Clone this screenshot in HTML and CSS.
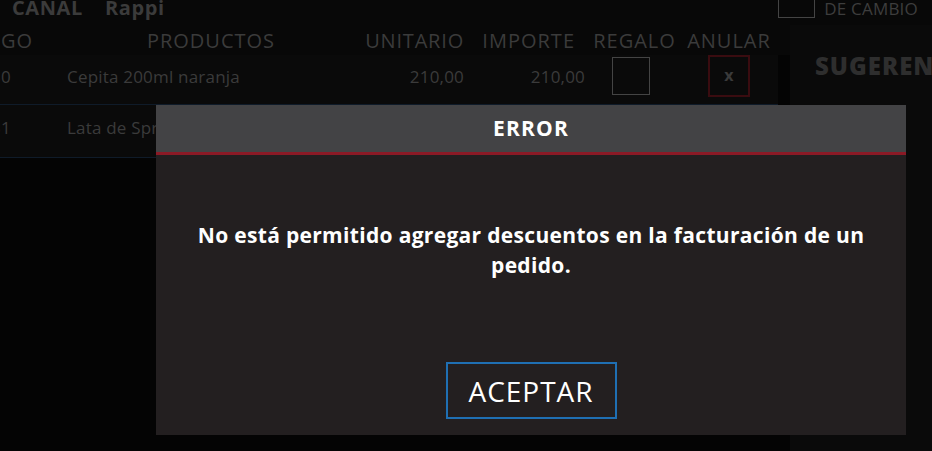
FILE: index.html
```html
<!DOCTYPE html>
<html lang="es">
<head>
<meta charset="utf-8">
<title>Error</title>
<link rel="stylesheet" href="styles.css">
</head>
<body>
<div class="app">
  <div class="topbar">
    <div class="canal"><span class="canal-label">CANAL</span><span class="canal-value">Rappi</span></div>
    <div class="cambio"><span class="check small"></span><span class="cambio-label">DE CAMBIO</span></div>
  </div>
  <div class="content">
    <div class="main">
      <div class="row head">
        <div class="c code">CÓDIGO</div>
        <div class="c prod">PRODUCTOS</div>
        <div class="c unit">UNITARIO</div>
        <div class="c imp">IMPORTE</div>
        <div class="c reg">REGALO</div>
        <div class="c anu">ANULAR</div>
      </div>
      <div class="row item">
        <div class="c code">1230</div>
        <div class="c prod">Cepita 200ml naranja</div>
        <div class="c unit">210,00</div>
        <div class="c imp">210,00</div>
        <div class="c reg"><span class="check"></span></div>
        <div class="c anu"><span class="cancel">x</span></div>
      </div>
      <div class="row item">
        <div class="c code">1231</div>
        <div class="c prod">Lata de Sprite 354ml</div>
        <div class="c unit">180,00</div>
        <div class="c imp">180,00</div>
        <div class="c reg"><span class="check"></span></div>
        <div class="c anu"><span class="cancel">x</span></div>
      </div>
    </div>
    <div class="side">
      <div class="side-title">SUGERENCIAS</div>
    </div>
  </div>
</div>

<div class="modal">
  <div class="modal-head">ERROR</div>
  <div class="modal-body">
    <p class="msg">No está permitido agregar descuentos en la facturación de un pedido.</p>
    <button class="btn">ACEPTAR</button>
  </div>
</div>
</body>
</html>
```

FILE: styles.css
```css
* { box-sizing: border-box; }
html, body {
  margin: 0;
  width: 932px;
  height: 451px;
  overflow: hidden;
  background: #040404;
  font-family: "Open Sans", Lato, sans-serif;
}
.app {
  display: flex;
  flex-direction: column;
  height: 451px;
}
.topbar {
  height: 25px;
  background: #080808;
  display: flex;
  justify-content: space-between;
  align-items: flex-start;
}
.canal {
  margin-top: -6px;
  padding-left: 12px;
  display: flex;
  gap: 22px;
  font-weight: 700;
  font-size: 20px;
  letter-spacing: 0.6px;
  color: #3b3b3b;
}
.cambio {
  display: flex;
  align-items: flex-start;
  gap: 9px;
  padding-right: 14px;
}
.check {
  display: block;
  width: 38px;
  height: 38px;
  border: 1px solid #444444;
}
.check.small {
  width: 37px;
  height: 18px;
  border-top: none;
}
.cambio-label {
  color: #3d3d3d;
  font-size: 17px;
  letter-spacing: 0.2px;
  line-height: 18px;
}
.content {
  flex: 1;
  display: flex;
}
.main {
  display: flex;
  flex-direction: column;
  margin-left: -69px;
  flex-shrink: 0;
  width: 859px;
}
.row {
  display: flex;
  align-items: center;
  color: #3b3b3b;
}
.row.head {
  height: 30px;
  font-size: 20px;
  letter-spacing: 1px;
  background: #080808;
}
.row.item {
  font-size: 17px;
  letter-spacing: 0.2px;
  background: #0a0a0a;
  border-bottom: 1px solid #0f1b29;
  width: 847px;
}
.row.item:nth-child(2) { height: 50px; padding-bottom: 7px; }
.row.item:nth-child(3) { height: 53px; padding-bottom: 8px; }
.c { flex-shrink: 0; white-space: nowrap; }
.code { width: 120px; text-align: center; }
.prod { width: 300px; text-align: center; }
.head .prod { padding-left: 20px; }
.item .prod { text-align: left; padding-left: 16px; }
.unit { width: 113px; text-align: right; }
.head .unit { letter-spacing: 0.8px; }
.imp { width: 129px; text-align: right; padding-right: 18px; }
.item .imp { padding-right: 8px; }
.reg { width: 76px; display: flex; justify-content: center; }
.head .reg { padding-left: 7px; }
.anu { width: 120px; display: flex; justify-content: center; }
.cancel {
  width: 42px;
  height: 42px;
  border: 2px solid #3a0c10;
  display: flex;
  align-items: center;
  justify-content: center;
  color: #3a3a3a;
  font-size: 16px;
  font-weight: 700;
  padding-bottom: 2px;
}
.side {
  flex: 1;
  background: #0a0a0a;
  padding: 24px 0 0 25px;
  overflow: hidden;
}
.side-title {
  font-size: 24px;
  font-weight: 800;
  letter-spacing: 1px;
  color: #2e2e2e;
  white-space: nowrap;
}

.modal {
  position: absolute;
  left: 156px;
  top: 105px;
  width: 750px;
  height: 330px;
  background: #231f20;
  display: flex;
  flex-direction: column;
}
.modal-head {
  height: 50px;
  background: #434345;
  border-bottom: 3px solid #8b1a26;
  color: #ffffff;
  font-weight: 700;
  font-size: 21px;
  letter-spacing: 1.2px;
  display: flex;
  align-items: center;
  justify-content: center;
  padding-bottom: 1px;
}
.modal-body {
  flex: 1;
  display: flex;
  flex-direction: column;
  align-items: center;
}
.msg {
  margin: 65px 0 0;
  width: 700px;
  text-align: center;
  color: #ffffff;
  font-weight: 700;
  font-size: 21px;
  letter-spacing: 0.32px;
  line-height: 30px;
}
.btn {
  margin-top: 82px;
  width: 171px;
  height: 57px;
  background: transparent;
  border: 2px solid #1f6fb3;
  color: #ffffff;
  font-family: "Open Sans", Lato, sans-serif;
  font-size: 28px;
  letter-spacing: 1px;
  padding: 0;
}
```
